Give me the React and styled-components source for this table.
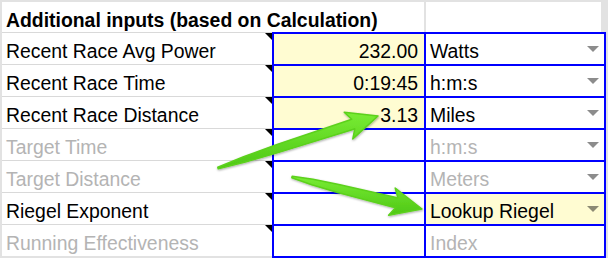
import React from "react";
import styled, { createGlobalStyle } from "styled-components";

const Global = createGlobalStyle`
  html, body { margin: 0; padding: 0; background: #fff; }
  body { font-family: "Liberation Sans", Arial, sans-serif; }
`;

const Sheet = styled.div`
  position: relative;
  width: 608px;
  height: 258px;
  box-sizing: border-box;
  background: #e2e2e2;
  padding: 2px 2px 0 2px;
  display: flex;
  flex-direction: column;
  font-family: "Liberation Sans", Arial, sans-serif;
  font-size: 19.4px;
  color: #000;
  overflow: hidden;
`;

const HeaderRow = styled.div`
  display: flex;
  gap: 2px;
  height: 30px;
  flex: none;
`;

const HeaderCell = styled.div`
  width: ${(p) => p.$w}px;
  box-sizing: border-box;
  background: #fff;
  display: flex;
  align-items: flex-end;
  padding: 0 0 1px 4px;
  font-weight: 700;
  line-height: 22px;
  white-space: nowrap;
`;

const Body = styled.div`
  display: flex;
  flex: 1;
`;

const LabelColumn = styled.div`
  width: 270px;
  display: flex;
  flex-direction: column;
  background: #e2e2e2;
`;

const LabelCell = styled.div`
  position: relative;
  height: 32px;
  box-sizing: border-box;
  border-top: 1px solid #d9d9d9;
  background: #fff;
  display: flex;
  align-items: flex-end;
  padding: 0 0 2px 4px;
  line-height: 22px;
  white-space: nowrap;
  color: ${(p) => (p.$muted ? "#b4b4b4" : "#000")};

  &::after {
    content: "";
    position: absolute;
    top: 0;
    right: 0;
    width: 0;
    height: 0;
    border-top: 7px solid #000;
    border-left: 7px solid transparent;
  }
`;

const InputGrid = styled.div`
  width: 334px;
  box-sizing: border-box;
  display: grid;
  grid-template-columns: 150px 178px;
  grid-auto-rows: 30px;
  gap: 2px;
  padding: 2px;
  background: #0000ff;
`;

const ValueCell = styled.div`
  background: ${(p) => (p.$yellow ? "#fffcd2" : "#fff")};
  display: flex;
  align-items: flex-end;
  justify-content: flex-end;
  padding: 0 6px 2px 0;
  line-height: 22px;
  white-space: nowrap;
`;

const UnitCell = styled.div`
  background: ${(p) => (p.$yellow ? "#fffcd2" : "#fff")};
  display: flex;
  align-items: flex-end;
  justify-content: space-between;
  padding: 0 5px 2px 4px;
  line-height: 22px;
  white-space: nowrap;
  color: ${(p) => (p.$muted ? "#b4b4b4" : "#000")};
`;

const Caret = styled.span`
  align-self: center;
  margin-top: 2px;
  width: 0;
  height: 0;
  border-left: 6px solid transparent;
  border-right: 6px solid transparent;
  border-top: 6px solid rgba(0, 0, 0, 0.45);
`;

const Overlay = styled.svg`
  position: absolute;
  left: 0;
  top: 0;
  width: 608px;
  height: 258px;
  pointer-events: none;
`;

const rows = [
  { label: "Recent Race Avg Power", value: "232.00", unit: "Watts", yellow: true, caret: true },
  { label: "Recent Race Time", value: "0:19:45", unit: "h:m:s", yellow: true, caret: true },
  { label: "Recent Race Distance", value: "3.13", unit: "Miles", yellow: true, caret: true },
  { label: "Target Time", muted: true, value: "", unit: "h:m:s", unitMuted: true, caret: true },
  { label: "Target Distance", muted: true, value: "", unit: "Meters", unitMuted: true, caret: true },
  { label: "Riegel Exponent", value: "", unit: "Lookup Riegel", unitYellow: true, caret: true },
  { label: "Running Effectiveness", muted: true, value: "", unit: "Index", unitMuted: true, caret: false },
];

function arrowPoints(T, P) {
  const dx = P[0] - T[0];
  const dy = P[1] - T[1];
  const L = Math.hypot(dx, dy);
  const d = [dx / L, dy / L];
  const n = [-d[1], d[0]];
  const headLen = 29;
  const headHalf = 14;
  const shaftLen = L - headLen;
  const at = (t, w) => [T[0] + d[0] * shaftLen * t + n[0] * w, T[1] + d[1] * shaftLen * t + n[1] * w];
  const B = [P[0] - d[0] * headLen, P[1] - d[1] * headLen];
  const off = (base, along, side) => [base[0] + d[0] * along + n[0] * side, base[1] + d[1] * along + n[1] * side];
  const profile = [
    [0, 0.7],
    [0.2, 2.8],
    [0.45, 4],
    [1, 5],
  ];
  const left = profile.map(([t, w]) => at(t, w));
  const right = profile.map(([t, w]) => at(t, -w)).reverse();
  const pts = [
    ...left,
    off(B, 3, 5),
    off(B, -2, headHalf),
    P,
    off(B, -2, -headHalf),
    off(B, 3, -5),
    ...right,
  ];
  return pts.map((p) => `${p[0].toFixed(1)},${p[1].toFixed(1)}`).join(" ");
}

export default function App() {
  return (
    <>
      <Global />
      <Sheet>
        <HeaderRow>
          <HeaderCell $w={422}>Additional inputs (based on Calculation)</HeaderCell>
          <HeaderCell $w={175} />
        </HeaderRow>
        <Body>
          <LabelColumn>
            {rows.map((r) => (
              <LabelCell key={r.label} $muted={r.muted}>
                {r.label}
              </LabelCell>
            ))}
          </LabelColumn>
          <InputGrid>
            {rows.map((r) => (
              <React.Fragment key={r.label}>
                <ValueCell $yellow={r.yellow}>{r.value}</ValueCell>
                <UnitCell $yellow={r.unitYellow} $muted={r.unitMuted}>
                  <span>{r.unit}</span>
                  {r.caret && <Caret />}
                </UnitCell>
              </React.Fragment>
            ))}
          </InputGrid>
        </Body>
        <Overlay viewBox="0 0 608 258">
          <defs>
            <linearGradient id="g" x1="0" y1="0" x2="0" y2="1">
              <stop offset="0" stopColor="#78ec34" />
              <stop offset="1" stopColor="#4fc716" />
            </linearGradient>
            <filter id="sh" x="-10%" y="-20%" width="120%" height="150%">
              <feDropShadow dx="0.5" dy="1" stdDeviation="0.8" floodColor="#000" floodOpacity="0.35" />
            </filter>
          </defs>
          <polygon
            points={arrowPoints([218, 168], [378, 116])}
            fill="url(#g)"
            stroke="#5cd11c"
            strokeWidth="1.5"
            strokeLinejoin="round"
            filter="url(#sh)"
          />
          <polygon
            points={arrowPoints([292, 177], [422, 209])}
            fill="url(#g)"
            stroke="#5cd11c"
            strokeWidth="1.5"
            strokeLinejoin="round"
            filter="url(#sh)"
          />
        </Overlay>
      </Sheet>
    </>
  );
}
